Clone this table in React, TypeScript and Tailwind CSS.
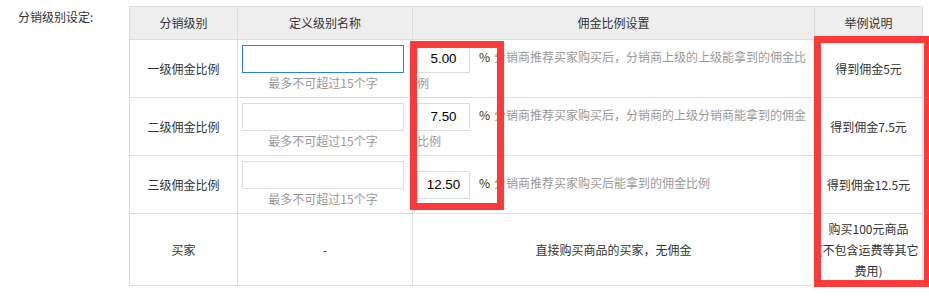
import React from 'react';

type Level = {
    name: string;
    rate: string;
    desc: string;
    example: string;
    amount: string;
};

const levels: Level[] = [
    { name: '一级佣金比例', rate: '5.00', desc: '分销商推荐买家购买后，分销商上级的上级能拿到的佣金比例', example: '得到佣金', amount: '5元' },
    { name: '二级佣金比例', rate: '7.50', desc: '分销商推荐买家购买后，分销商的上级分销商能拿到的佣金比例', example: '得到佣金', amount: '7.5元' },
    { name: '三级佣金比例', rate: '12.50', desc: '分销商推荐买家购买后能拿到的佣金比例', example: '得到佣金', amount: '12.5元' },
];

const cell = 'border border-[#dddddd] align-middle';

const App = () => {
    return (
        <div className="relative h-[298px] w-full overflow-hidden bg-white pt-[6px] text-[12px] text-[#333] font-['Noto_Sans_CJK_SC',sans-serif]">
            <div className="flex">
                <div className="w-[129px] shrink-0 pl-[18px] pt-[1px] leading-[20px]">分销级别设定:</div>
                <table className="table-fixed border-collapse w-[794px]">
                    <colgroup>
                        <col className="w-[108px]" />
                        <col className="w-[175px]" />
                        <col className="w-[402px]" />
                        <col className="w-[108px]" />
                    </colgroup>
                    <thead>
                        <tr className="h-[33px] bg-[#eeeeee]">
                            <th className={`${cell} font-normal`}>分销级别</th>
                            <th className={`${cell} font-normal`}>定义级别名称</th>
                            <th className={`${cell} font-normal`}>佣金比例设置</th>
                            <th className={`${cell} font-normal`}>举例说明</th>
                        </tr>
                    </thead>
                    <tbody>
                        {levels.map((lv, i) => (
                            <tr key={lv.name} className="h-[58px]">
                                <td className={`${cell} text-center`}>{lv.name}</td>
                                <td className={`${cell} pl-[4px] pr-[8px] text-center`}>
                                    <input
                                        type="text"
                                        className={`block h-[28px] w-[162px] bg-white outline-none ${i === 0 ? 'border border-[#2f7ce6]' : 'border border-[#dddddd]'}`}
                                    />
                                    <div className="leading-[20px] text-[#999]">最多不可超过15个字</div>
                                </td>
                                <td className={`${cell} pl-[4px] pr-[7px] text-left leading-[20px]`}>
                                    <input
                                        type="text"
                                        defaultValue={lv.rate}
                                        className="inline-block h-[28px] w-[53px] border border-[#dddddd] bg-white text-center align-middle text-[13.33px] text-black outline-none font-['Liberation_Sans',Arial,sans-serif]"
                                    />
                                    <span className="ml-[9px] text-[#333]">%</span>
                                    <span className="ml-[4px] text-[#999]">{lv.desc}</span>
                                </td>
                                <td className={`${cell} text-center`}>
                                    {lv.example}
                                    {lv.amount}
                                </td>
                            </tr>
                        ))}
                        <tr className="h-[72px]">
                            <td className={`${cell} text-center`}>买家</td>
                            <td className={`${cell} text-center`}>-</td>
                            <td className={`${cell} text-center`}>直接购买商品的买家，无佣金</td>
                            <td className={`${cell} text-center leading-[21px]`}>
                                购买100元商品
                                <br />
                                (不包含运费等其它
                                <br />
                                费用)
                            </td>
                        </tr>
                    </tbody>
                </table>
            </div>

            {/* red highlight frames drawn over the rate inputs and the example column */}
            <div className="pointer-events-none absolute left-[410px] top-[41px] h-[169px] w-[94px] border-[7px] border-[#fd3a3a]" />
            <div className="pointer-events-none absolute left-[814px] top-[36px] h-[251px] w-[117px] border-[7px] border-[#fd3a3a]" />
        </div>
    );
};

export default App;
